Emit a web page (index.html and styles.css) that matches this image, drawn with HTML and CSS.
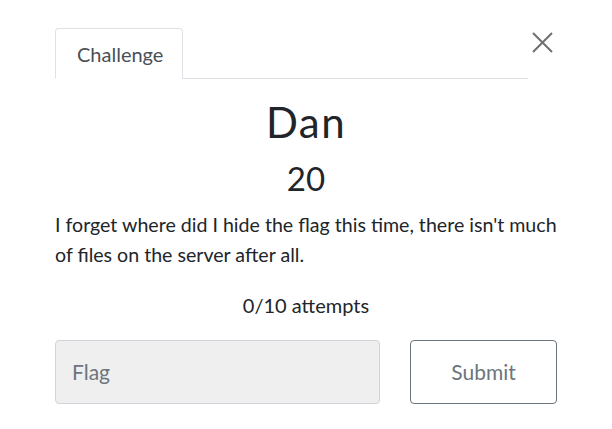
FILE: index.html
```html
<!DOCTYPE html>
<html>
<head>
<meta charset="utf-8">
<link rel="stylesheet" href="styles.css">
</head>
<body>
<div class="modal">
  <div class="header">
    <ul class="tabs">
      <li class="tab">Challenge</li>
    </ul>
    <button class="close" aria-label="Close">
      <svg width="21" height="21" viewBox="0 0 21 21"><path d="M1 1 L20 20 M20 1 L1 20" stroke="#6f6f6f" stroke-width="2" fill="none"/></svg>
    </button>
  </div>
  <h2 class="name">Dan</h2>
  <h3 class="value">20</h3>
  <p class="desc">I forget where did I hide the flag this time, there isn't much of files on the server after all.</p>
  <p class="attempts">0/10 attempts</p>
  <div class="submit-row">
    <input class="flag" type="text" placeholder="Flag">
    <button class="submit">Submit</button>
  </div>
</div>
</body>
</html>
```
FILE: styles.css
```css
html, body {
  margin: 0;
  padding: 0;
  background: #fff;
}
body {
  font-family: Lato, "Open Sans", sans-serif;
  color: #212529;
}
.modal {
  margin-left: 55px;
  width: 502px;
  padding-top: 28px;
}
.header {
  display: flex;
  align-items: flex-start;
}
.tabs {
  flex: 0 0 473px;
  list-style: none;
  margin: 0;
  padding: 0;
  display: flex;
  border-bottom: 1px solid #dee2e6;
}
.tab {
  box-sizing: border-box;
  width: 128px;
  height: 51px;
  margin-bottom: -1px;
  padding-left: 21px;
  line-height: 50px;
  font-size: 20px;
  color: #495057;
  border: 1px solid #dee2e6;
  border-bottom-color: #fff;
  border-radius: 4px 4px 0 0;
  background: #fff;
}
.close {
  flex: 1;
  background: none;
  border: 0;
  padding: 4px 0 0 4px;
  margin: 0;
  display: flex;
  justify-content: flex-start;
  cursor: pointer;
}
.close svg { display: block; }
.name {
  margin: 18px 0 0;
  text-align: center;
  font-size: 42px;
  font-weight: 400;
  letter-spacing: 1.5px;
  line-height: 1.2;
}
.value {
  margin: 12px 0 0;
  text-align: center;
  font-size: 33px;
  font-weight: 400;
  line-height: 1.2;
}
.desc {
  margin: 11px -15px 0 0;
  font-size: 19.6px;
  line-height: 30px;
}
.attempts {
  margin: 20px 0 0;
  text-align: center;
  font-size: 20px;
  line-height: 30px;
}
.submit-row {
  margin-top: 20px;
  display: flex;
  gap: 30px;
}
.flag {
  box-sizing: border-box;
  width: 325px;
  height: 64px;
  padding: 0 16px;
  font-family: Lato, sans-serif;
  font-size: 21px;
  color: #495057;
  background: #efefef;
  border: 1px solid #ced4da;
  border-radius: 4px;
  outline: none;
}
.flag::placeholder { color: #6c757d; opacity: 1; }
.submit {
  box-sizing: border-box;
  width: 147px;
  height: 64px;
  font-family: Lato, sans-serif;
  font-size: 21px;
  color: #6c757d;
  background: #fff;
  border: 1px solid #6c757d;
  border-radius: 4px;
}
```
